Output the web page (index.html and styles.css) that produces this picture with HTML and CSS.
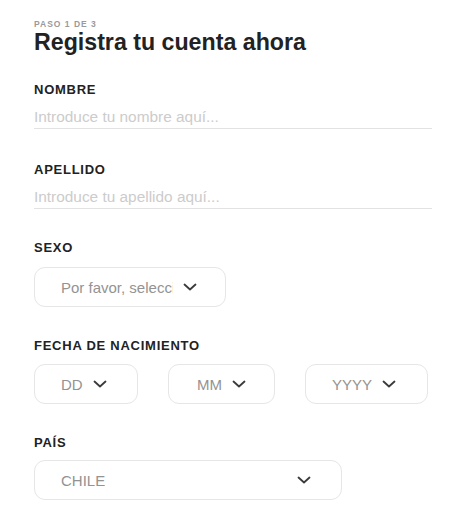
FILE: index.html
```html
<!DOCTYPE html>
<html lang="es">
<head>
<meta charset="utf-8">
<title>Registro</title>
<link rel="stylesheet" href="styles.css">
</head>
<body>
<main class="page">
  <div class="step">PASO 1 DE 3</div>
  <h1 class="title">Registra tu cuenta ahora</h1>

  <div class="field field-first">
    <div class="label">NOMBRE</div>
    <div class="input">Introduce tu nombre aquí...</div>
  </div>

  <div class="field field-second">
    <div class="label">APELLIDO</div>
    <div class="input">Introduce tu apellido aquí...</div>
  </div>

  <div class="field">
    <div class="label">SEXO</div>
    <div class="select select-sexo">
      <span class="select-text clip">Por favor, selecciona</span>
      <svg class="chev" viewBox="0 0 14 8" width="14" height="8"><polyline points="1.5,1.5 7,6.5 12.5,1.5"/></svg>
    </div>
  </div>

  <div class="field">
    <div class="label">FECHA DE NACIMIENTO</div>
    <div class="date-row">
      <div class="select select-dd">
        <span class="select-text">DD</span>
        <svg class="chev" viewBox="0 0 14 8" width="14" height="8"><polyline points="1.5,1.5 7,6.5 12.5,1.5"/></svg>
      </div>
      <div class="select select-mm">
        <span class="select-text">MM</span>
        <svg class="chev" viewBox="0 0 14 8" width="14" height="8"><polyline points="1.5,1.5 7,6.5 12.5,1.5"/></svg>
      </div>
      <div class="select select-yyyy">
        <span class="select-text">YYYY</span>
        <svg class="chev" viewBox="0 0 14 8" width="14" height="8"><polyline points="1.5,1.5 7,6.5 12.5,1.5"/></svg>
      </div>
    </div>
  </div>

  <div class="field field-pais">
    <div class="label">PAÍS</div>
    <div class="select select-pais">
      <span class="select-text">CHILE</span>
      <svg class="chev" viewBox="0 0 14 8" width="14" height="8"><polyline points="1.5,1.5 7,6.5 12.5,1.5"/></svg>
    </div>
  </div>
</main>
</body>
</html>
```

FILE: styles.css
```css
* { box-sizing: border-box; }

html, body {
  margin: 0;
  padding: 0;
  background: #ffffff;
}

body {
  font-family: "Liberation Sans", Arial, sans-serif;
  color: #222222;
}

.page {
  width: 450px;
  padding: 20px 18px 0 34px;
}

.step {
  font-size: 8.5px;
  line-height: 9px;
  font-weight: bold;
  color: #9a9a9a;
  letter-spacing: 1px;
}

.title {
  margin: 0;
  font-size: 23.2px;
  line-height: 26px;
  font-weight: bold;
  color: #222222;
}

.field {
  margin-top: 31px;
}

.field-first {
  margin-top: 27px;
}

.field-second {
  margin-top: 33px;
}

.label {
  font-size: 13px;
  line-height: 16px;
  font-weight: bold;
  color: #222222;
  letter-spacing: 0.75px;
  margin-bottom: 9px;
}

.input {
  font-size: 15.4px;
  line-height: 20px;
  color: #cccccc;
  padding-bottom: 1px;
  border-bottom: 1px solid #e2e2e2;
}

.select {
  display: flex;
  align-items: center;
  height: 40px;
  margin-top: 11px;
  border: 1px solid #e6e6e6;
  border-radius: 11px;
  padding: 0 0 0 26px;
  font-size: 15px;
  color: #939393;
}

.field-pais .select {
  margin-top: 9px;
}

.select-text {
  white-space: nowrap;
}

.clip {
  width: 112px;
  overflow: hidden;
}

.chev {
  flex: none;
  fill: none;
  stroke: #3a3a3a;
  stroke-width: 1.8;
  stroke-linecap: round;
  stroke-linejoin: round;
}

.select-sexo {
  width: 192px;
  gap: 10px;
}

.date-row {
  display: flex;
  gap: 30px;
  margin-top: 10px;
}

.date-row .select {
  margin-top: 0;
}

.select-dd {
  width: 104px;
  gap: 10px;
}

.select-mm {
  width: 107px;
  gap: 10px;
  padding-left: 28px;
}

.select-yyyy {
  width: 123px;
  gap: 10px;
}

.select-pais {
  width: 308px;
  justify-content: space-between;
  padding-right: 30px;
}
```
